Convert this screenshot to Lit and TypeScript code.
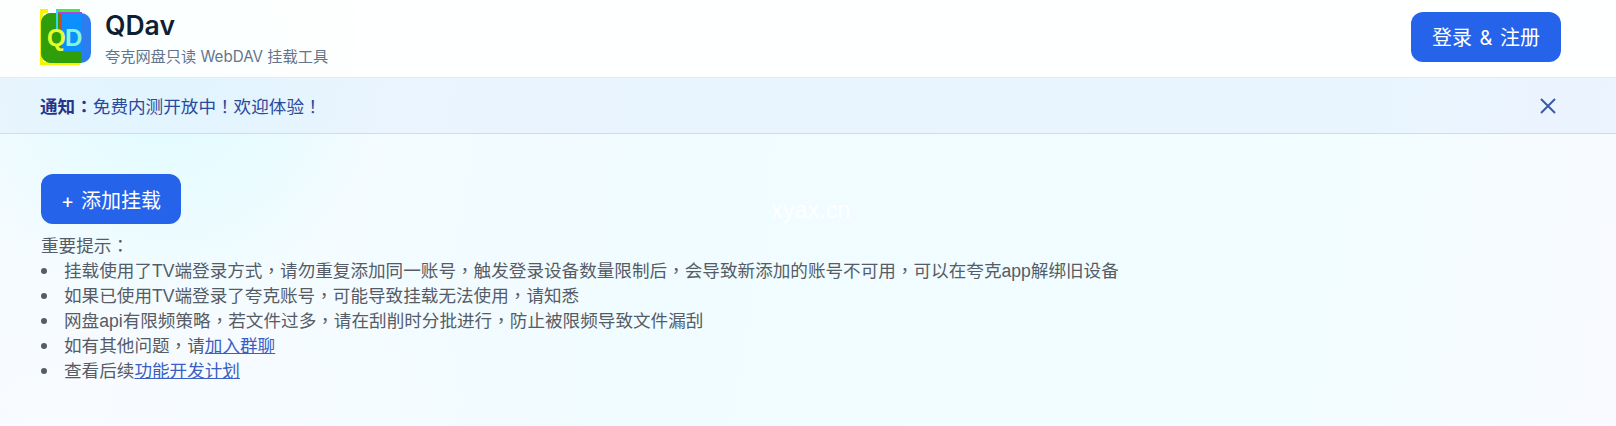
import { LitElement, html, css } from 'lit';
import { customElement } from 'lit/decorators.js';

const tips = [
  { text: '挂载使用了TV端登录方式，请勿重复添加同一账号，触发登录设备数量限制后，会导致新添加的账号不可用，可以在夸克app解绑旧设备' },
  { text: '如果已使用TV端登录了夸克账号，可能导致挂载无法使用，请知悉' },
  { text: '网盘api有限频策略，若文件过多，请在刮削时分批进行，防止被限频导致文件漏刮' },
  { text: '如有其他问题，请', link: '加入群聊' },
  { text: '查看后续', link: '功能开发计划' },
];

// the reference font centres full-width punctuation in its cell
const punct = (s: string) =>
  s.split(/([，！：])/).map((part, i) => (i % 2 ? html`<span class="p">${part}</span>` : part));

@customElement('app-root')
export class AppRoot extends LitElement {
  static styles = css`
    :host {
      display: block;
      height: 426px;
      overflow: hidden;
      font-family: "Inter", "Noto Sans CJK SC", sans-serif;
      background:
        radial-gradient(ellipse 230px 280px at 160px 40px, #dcfcff 0%, rgba(224, 252, 255, 0) 100%),
        radial-gradient(ellipse 420px 200px at 60px 400px, #f8fbff 0%, rgba(248, 251, 255, 0) 100%),
        linear-gradient(100deg, #f6fbff 0%, #f0fcff 45%, #f1fdff 80%, #f9faff 100%);
    }

    .p {
      font-family: "Noto Sans CJK TC", sans-serif;
      line-height: 0;
    }

    .header {
      display: flex;
      align-items: center;
      justify-content: space-between;
      height: 78px;
      box-sizing: border-box;
      padding: 0 55px 0 40px;
      background: rgba(255, 255, 255, 0.88);
      border-bottom: 1px solid #e5edf3;
    }

    .brand {
      display: flex;
      align-items: center;
      gap: 13px;
    }

    .logo {
      display: block;
      width: 52px;
      height: 56px;
      margin-top: -4px;
    }

    .logo-text {
      font-family: "Liberation Sans", sans-serif;
      font-size: 24px;
      font-weight: 700;
    }

    .title {
      font-size: 26.5px;
      line-height: 30px;
      font-weight: 600;
      color: #0f1f33;
    }

    .subtitle {
      font-size: 15.2px;
      line-height: 22px;
      margin-top: 6px;
      color: #64748b;
    }

    .btn {
      border: none;
      border-radius: 12px;
      background: #2563eb;
      color: #fff;
      font-family: inherit;
      font-size: 20px;
      height: 50px;
      padding: 0;
    }

    .btn-login {
      width: 150px;
      margin-bottom: 4px;
      word-spacing: 2px;
    }

    .btn-add {
      display: block;
      width: 140px;
      word-spacing: 1px;
    }

    .notice {
      display: flex;
      align-items: center;
      justify-content: space-between;
      height: 56px;
      box-sizing: border-box;
      padding: 0 59px 0 40px;
      background: rgba(225, 238, 253, 0.55);
      border-bottom: 1px solid #cfdcec;
      font-size: 17.6px;
      color: #2a4a9c;
    }

    .notice b {
      color: #27348b;
      font-weight: 700;
    }

    .close {
      display: block;
      width: 18px;
      height: 18px;
      color: #3b5aa8;
    }

    .main {
      padding: 40px 41px 0;
    }

    .tips {
      margin-top: 10px;
      font-family: "Liberation Sans", "Noto Sans CJK SC", sans-serif;
      font-size: 17.6px;
      line-height: 25px;
      color: #555c66;
    }

    ul {
      margin: 0;
      padding: 0;
      list-style: none;
    }

    li::before {
      content: "";
      display: inline-block;
      width: 6px;
      height: 6px;
      margin: 0 17px 0 0;
      border-radius: 50%;
      background: #555c66;
      vertical-align: 3px;
    }

    a {
      color: #3b5fc4;
      text-decoration: underline;
    }

    .watermark {
      position: absolute;
      left: 771px;
      top: 197px;
      font-family: "Liberation Sans", sans-serif;
      font-size: 23.5px;
      color: #fff;
    }
  `;

  render() {
    return html`
      <div class="header">
        <div class="brand">
          <svg class="logo" viewBox="0 0 52 56">
            <path d="M0 0h8v4H3v49h37v3H0z" fill="#f5f500"/>
            <rect x="1" y="4" width="50" height="50" rx="10" fill="#2b7df0"/>
            <path d="M11 4h30v50H11A10 10 0 0 1 1 44V14A10 10 0 0 1 11 4z" fill="#2f9e0a"/>
            <path d="M22 4h19v38H22z" fill="#0a90ff"/>
            <path d="M16 0h24v3H16z" fill="#3cf03c"/>
            <path d="M16 3h26v2H16z" fill="#b040e0"/>
            <path d="M16 1h2v22h-2z" fill="#33d6f0"/>
            <path d="M19 5h2v18h-2z" fill="#d6471c"/>
            <text class="logo-text" x="7" y="37" fill="#eaff2a">Q</text>
            <text class="logo-text" x="25" y="37" fill="#8af5d0">D</text>
          </svg>
          <div>
            <div class="title">QDav</div>
            <div class="subtitle">夸克网盘只读 WebDAV 挂载工具</div>
          </div>
        </div>
        <button class="btn btn-login">登录 &amp; 注册</button>
      </div>
      <div class="notice">
        <div><b>通知${punct('：')}</b>${punct('免费内测开放中！欢迎体验！')}</div>
        <svg class="close" viewBox="0 0 18 18" fill="none" stroke="currentColor" stroke-width="2">
          <path d="M2 2l14 14M16 2L2 16"/>
        </svg>
      </div>
      <div class="main">
        <button class="btn btn-add">+ 添加挂载</button>
        <div class="tips">
          <div>重要提示${punct('：')}</div>
          <ul>
            ${tips.map(t => html`<li>${punct(t.text)}${t.link ? html`<a href="#">${t.link}</a>` : ''}</li>`)}
          </ul>
        </div>
      </div>
      <div class="watermark">xyax.cn</div>
    `;
  }
}
